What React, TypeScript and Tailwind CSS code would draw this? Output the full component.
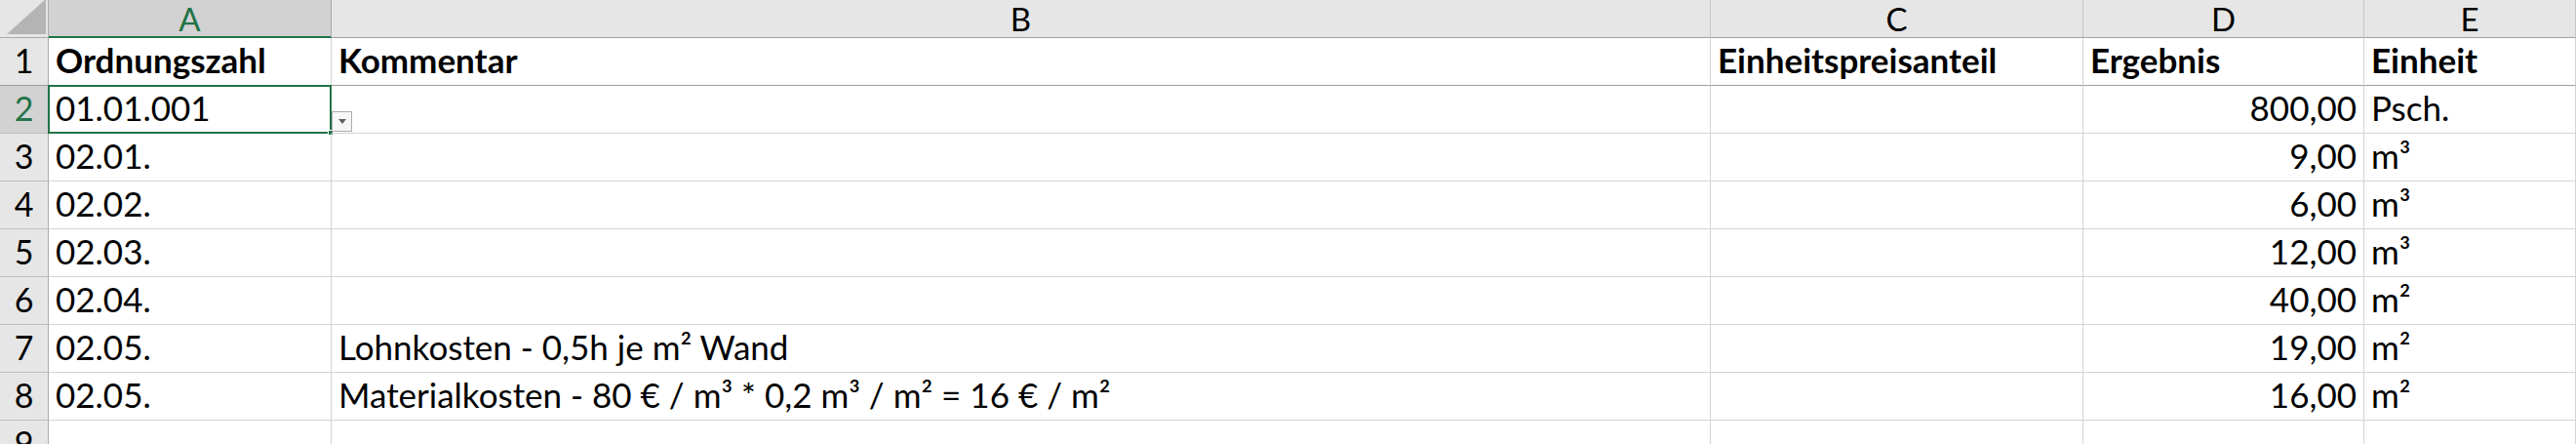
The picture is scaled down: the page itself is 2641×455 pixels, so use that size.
import React from 'react';

type Row = {
    n: number;
    cells: string[];
};

const columns = ['A', 'B', 'C', 'D', 'E'];

const rows: Row[] = [
    { n: 1, cells: ['Ordnungszahl', 'Kommentar', 'Einheitspreisanteil', 'Ergebnis', 'Einheit'] },
    { n: 2, cells: ['01.01.001', '', '', '800,00', 'Psch.'] },
    { n: 3, cells: ['02.01.', '', '', '9,00', 'm³'] },
    { n: 4, cells: ['02.02.', '', '', '6,00', 'm³'] },
    { n: 5, cells: ['02.03.', '', '', '12,00', 'm³'] },
    { n: 6, cells: ['02.04.', '', '', '40,00', 'm²'] },
    { n: 7, cells: ['02.05.', 'Lohnkosten - 0,5h je m² Wand', '', '19,00', 'm²'] },
    { n: 8, cells: ['02.05.', 'Materialkosten - 80 € / m³ * 0,2 m³ / m² = 16 € / m²', '', '16,00', 'm²'] },
    { n: 9, cells: ['', '', '', '', ''] },
];

const font = { fontFamily: 'Lato, "Open Sans", sans-serif' };

export default function App() {
    return (
        <div className="w-[2641px] h-[455px] overflow-hidden bg-white text-black" style={font}>
            <div className="grid grid-cols-[50px_290px_1414px_382px_288px_1fr] grid-rows-[39px] auto-rows-[49px]">
                {/* corner */}
                <div className="bg-[#e6e6e6] border-r border-b border-[#ababab] flex items-end justify-end pr-[2px] pb-[3px]">
                    <svg width="40" height="36" viewBox="0 0 40 36">
                        <polygon points="0,36 40,36 40,0" fill="#b4b4b4" />
                    </svg>
                </div>
                {columns.map((c) => (
                    <div
                        key={c}
                        className={
                            c === 'A'
                                ? 'bg-[#d2d2d2] border-r border-[#ababab] border-b-2 border-b-[#217346] text-[#217346] flex items-center justify-center text-[33px] leading-[36px]'
                                : 'bg-[#e6e6e6] border-r border-[#c6c6c6] border-b border-b-[#9e9e9e] flex items-center justify-center text-[33px] leading-[36px]'
                        }
                    >
                        {c}
                    </div>
                ))}

                {rows.map((row) => (
                    <React.Fragment key={row.n}>
                        <div
                            className={
                                row.n === 2
                                    ? 'bg-[#d2d2d2] text-[#217346] border-r border-b border-r-[#217346] border-b-[#bdbdbd] flex items-end justify-center pb-[8px] text-[34px] leading-none'
                                    : row.n === 1
                                    ? 'bg-[#e6e6e6] border-r border-b border-r-[#ababab] border-b-[#9e9e9e] flex items-end justify-center pb-[8px] text-[34px] leading-none'
                                    : 'bg-[#e6e6e6] border-r border-b border-r-[#ababab] border-b-[#bdbdbd] flex items-end justify-center pb-[8px] text-[34px] leading-none'
                            }
                        >
                            {row.n}
                        </div>
                        {row.cells.map((text, i) => (
                            <div
                                key={i}
                                className={
                                    'relative flex items-end px-[7px] pb-[8px] text-[35px] leading-none whitespace-nowrap border-r border-[#d4d4d4] ' +
                                    (row.n === 1 ? 'border-b border-b-[#9e9e9e] font-bold ' : 'border-b ') +
                                    (i === 3 && row.n !== 1 ? 'justify-end' : 'justify-start')
                                }
                            >
                                {text}
                                {row.n === 2 && i === 0 && (
                                    <>
                                        <div className="absolute -left-[1px] -top-[1px] -right-[1px] -bottom-[1px] border-2 border-[#217346] pointer-events-none" />
                                        <div className="absolute -right-[3px] -bottom-[3px] w-[6px] h-[6px] bg-[#217346] border border-white" />
                                    </>
                                )}
                                {row.n === 2 && i === 1 && (
                                    <div className="absolute left-0 top-[26px] w-[21px] h-[21px] bg-[#f7f7f7] border border-[#ababab] flex items-center justify-center">
                                        <svg width="8" height="5" viewBox="0 0 8 5">
                                            <polygon points="0,0 8,0 4,5" fill="#5f5f5f" />
                                        </svg>
                                    </div>
                                )}
                            </div>
                        ))}
                    </React.Fragment>
                ))}
            </div>
        </div>
    );
}
